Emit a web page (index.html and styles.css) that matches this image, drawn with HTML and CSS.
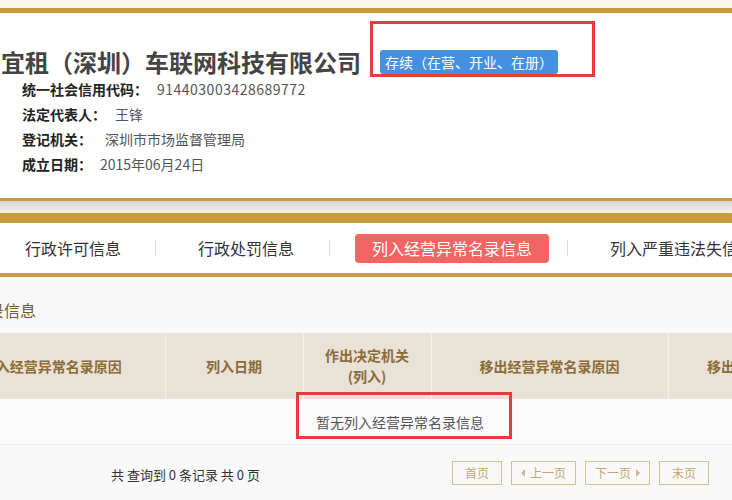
FILE: index.html
```html
<!DOCTYPE html>
<html lang="zh-CN">

<head>
    <meta charset="UTF-8">
    <meta name="viewport" content="width=device-width, initial-scale=1.0">
    <title>企业信用信息</title>
    <link rel="stylesheet" href="styles.css">
</head>

<body>
    <div class="page">
        <!-- company card -->
        <div class="company-card">
            <div class="title-row">
                <h1 class="company-name">宜租（深圳）车联网科技有限公司</h1>
                <span class="status-badge">存续（在营、开业、在册）</span>
            </div>
            <div class="info-row"><span class="info-label">统一社会信用代码：</span><span class="info-value digits">914403003428689772</span></div>
            <div class="info-row"><span class="info-label">法定代表人：</span><span class="info-value">王锋</span></div>
            <div class="info-row"><span class="info-label">登记机关：</span><span class="info-value v3">深圳市市场监督管理局</span></div>
            <div class="info-row"><span class="info-label">成立日期：</span><span class="info-value v4">2015年06月24日</span></div>
        </div>

        <div class="card-shadow"></div>

        <!-- tabs -->
        <div class="tab-bar">
            <span class="tab tab-first">行政许可信息</span>
            <span class="tab-sep sep1"></span>
            <span class="tab tab-second">行政处罚信息</span>
            <span class="tab-sep sep2"></span>
            <span class="tab tab-active">列入经营异常名录信息</span>
            <span class="tab-sep sep3"></span>
            <span class="tab tab-fourth">列入严重违法失信企业名单信息</span>
        </div>

        <div class="content">
            <div class="section-title">列入经营异常名录信息</div>

            <table class="record-table">
                <colgroup>
                    <col style="width: 226px">
                    <col style="width: 138px">
                    <col style="width: 128px">
                    <col style="width: 237px">
                    <col style="width: 134px">
                    <col style="width: 59px">
                </colgroup>
                <tr>
                    <th>列入经营异常名录原因</th>
                    <th>列入日期</th>
                    <th>作出决定机关<br>(列入)</th>
                    <th>移出经营异常名录原因</th>
                    <th>移出日期</th>
                    <th>作出决定机关<br>(移出)</th>
                </tr>
                <tr>
                    <td colspan="6" class="empty-cell">暂无列入经营异常名录信息</td>
                </tr>
            </table>

            <div class="pager">
                <span class="pager-info">共 查询到 0 条记录 共 0 页</span>
                <div class="pager-buttons">
                    <span class="page-btn btn-short">首页</span>
                    <span class="page-btn btn-long"><i class="arrow-left"></i>上一页</span>
                    <span class="page-btn btn-long">下一页<i class="arrow-right"></i></span>
                    <span class="page-btn btn-short">末页</span>
                </div>
            </div>
        </div>

        <!-- highlight boxes drawn over the screenshot -->
        <div class="mark mark-status"></div>
        <div class="mark mark-empty"></div>
    </div>
</body>

</html>
```

FILE: styles.css
```css
/* Styles for the page */
body {
    margin: 0;
    padding: 0;
    background-color: #f9f9f9;
    font-family: "Noto Sans CJK SC", "Liberation Sans", sans-serif;
    color: #333;
    overflow: hidden;
}

.page {
    position: relative;
    width: 732px;
    height: 500px;
    overflow: hidden;
    padding-top: 8px;
    box-sizing: border-box;
    background: linear-gradient(#faf6ee 0, #faf6ee 8px, #f9f9f9 8px);
}

/* company card */
.company-card {
    background-color: #fff;
    border-top: 5px solid #c99a3f;
    border-bottom: 3px solid #c99a3f;
    height: 193px;
    box-sizing: border-box;
    padding-top: 34px;
}

.title-row {
    display: flex;
    align-items: center;
    height: 30px;
    padding-left: 1px;
}

.company-name {
    margin: 0;
    font-size: 24px;
    line-height: 30px;
    font-weight: bold;
    color: #444;
}

.status-badge {
    margin-left: 19px;
    height: 24px;
    line-height: 24px;
    padding: 0 5px;
    background-color: #4590e0;
    color: #fff;
    font-size: 14px;
    border-radius: 3px;
}

.info-row {
    height: 25px;
    line-height: 25px;
    padding-left: 22px;
    font-size: 14px;
}

.info-label {
    font-weight: bold;
    color: #222;
}

.info-value {
    color: #555;
    margin-left: 9px;
}

.info-value.digits {
    letter-spacing: 0.5px;
}

.info-value.v3 {
    margin-left: 13px;
}

.info-value.v4 {
    margin-left: 8px;
}

.card-shadow {
    height: 12px;
    background: linear-gradient(#d6d3cd, #f6f4ef);
}

/* tabs */
.tab-bar {
    display: flex;
    align-items: center;
    height: 50px;
    background-color: #fff;
    border-top: 10px solid #c99a3f;
    border-bottom: 4px solid #c99a3f;
    padding-left: 25px;
    white-space: nowrap;
}

.tab,
.tab-sep {
    flex-shrink: 0;
}

.tab {
    font-size: 16px;
    line-height: 29px;
    color: #333;
}

.tab-sep {
    width: 1px;
    height: 16px;
    background-color: #ddd;
}

.sep1 {
    margin-left: 34px;
}

.tab-second {
    margin-left: 42px;
}

.sep2 {
    margin-left: 35px;
}

.tab-active {
    margin-left: 25px;
    width: 194px;
    text-align: center;
    background-color: #f26563;
    color: #fff;
    border-radius: 4px;
}

.sep3 {
    margin-left: 18px;
}

.tab-fourth {
    margin-left: 42px;
}

/* records */
.content {
    padding-top: 22px;
}

.section-title {
    margin-left: -124px;
    font-size: 16px;
    line-height: 22px;
    color: #7b5a2c;
    white-space: nowrap;
}

.record-table {
    margin-top: 12px;
    margin-left: -61px;
    width: 922px;
    table-layout: fixed;
    border-collapse: collapse;
}

.record-table th {
    height: 66px;
    padding: 0;
    background-color: #e9e2d7;
    border-left: 1px solid #f3efe8;
    color: #8c6b36;
    font-size: 14px;
    line-height: 21px;
    font-weight: bold;
    text-align: center;
}

.record-table th:first-child {
    border-left: none;
}

.empty-cell {
    height: 45px;
    padding: 0;
    text-align: center;
    font-size: 14px;
    color: #555;
    background-color: #fafafa;
    border-bottom: 1px solid #ececec;
}

/* pager */
.pager {
    display: flex;
    align-items: center;
    height: 55px;
}

.pager-info {
    margin-left: 111px;
    font-size: 13px;
    color: #333;
    padding-top: 4px;
}

.pager-buttons {
    display: flex;
    gap: 9px;
    margin-left: auto;
    margin-right: 23px;
}

.page-btn {
    display: flex;
    align-items: center;
    justify-content: center;
    height: 24px;
    box-sizing: border-box;
    border: 1px solid #d8c093;
    color: #c6a66e;
    font-size: 12px;
}

.btn-short {
    width: 50px;
}

.btn-long {
    width: 65px;
}

.arrow-left,
.arrow-right {
    width: 0;
    height: 0;
    border-top: 4px solid transparent;
    border-bottom: 4px solid transparent;
}

.arrow-left {
    border-right: 4px solid #cdb58c;
    margin-right: 5px;
}

.arrow-right {
    border-left: 4px solid #cdb58c;
    margin-left: 5px;
}

/* red annotation frames */
.mark {
    position: absolute;
    border: 3px solid #e63b3e;
    box-sizing: border-box;
}

.mark-status {
    left: 370px;
    top: 21px;
    width: 225px;
    height: 56px;
}

.mark-empty {
    left: 296px;
    top: 392px;
    width: 216px;
    height: 47px;
}
```
